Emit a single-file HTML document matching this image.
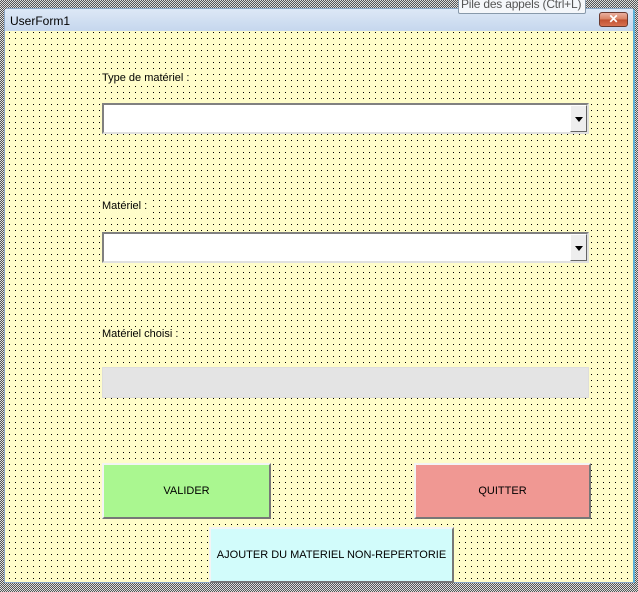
<!DOCTYPE html>
<html><head><meta charset="utf-8"><style>
*{margin:0;padding:0;box-sizing:border-box}
body{width:638px;height:592px;overflow:hidden;position:relative;
background:repeating-conic-gradient(#555 0 25%,#ddd 0 50%) 0 0/2px 2px;
font-family:"Liberation Sans",sans-serif;font-size:11px;color:#000}
.win{position:absolute;left:4px;top:8px;width:631px;height:575px;border:1px solid #8aa6c6;border-right:2px solid #5ab0d8;background:#fffdca;border-radius:4px 4px 0 0}
.title{position:absolute;left:0;top:0;right:0;height:23px;background:linear-gradient(#dde8f6,#c4d6ed);font-size:12px;padding:5px 0 0 5px}
.body{position:absolute;left:5px;top:31px;width:628px;height:551px;background-color:#fffdca;
background-image:conic-gradient(at 1px 1px,#0000 75%,#000 0);background-size:6px 6px;background-position:4px 1px}
.x{position:absolute;left:594px;top:3px;width:29px;height:15px;border:1px solid #6a3a30;border-radius:3px;background:linear-gradient(#eab0a0 0,#d88060 50%,#c05030 51%,#d87050);color:#fff;font-size:12px;font-weight:bold;text-align:center;line-height:13px}
.tip{position:absolute;left:458px;top:-5px;width:128px;height:19px;background:#f5f7fa;border:1px solid #8899aa;border-radius:2px;color:#555;font-size:12px;letter-spacing:-0.2px;white-space:nowrap;overflow:hidden;padding-left:2px;line-height:17px;z-index:5}
.lbl{position:absolute;background:#fffdca;padding:0 1px;line-height:13px}
.combo{position:absolute;left:102px;width:487px;height:31px;background:#fff;border:2px solid;border-color:#808080 #e0e0e0 #e0e0e0 #808080}
.combo .btn{position:absolute;right:0;top:0;width:17px;height:27px;background:#eee;border:1px solid;border-color:#fff #666 #666 #fff}
.combo .btn:after{content:"";position:absolute;left:4px;top:11px;border:4px solid transparent;border-top:5px solid #000}
.b{position:absolute;border:2px solid;border-color:#f4f4f4 #777 #777 #f4f4f4;display:flex;align-items:center;justify-content:center;font-size:11px}
</style></head><body>
<div class="tip">Pile des appels (Ctrl+L)</div>
<div class="win">
<div class="title">UserForm1<div class="x">✕</div></div>
</div>
<div class="body"></div>
<div class="lbl" style="left:101px;top:72px">Type de matériel :</div>
<div class="combo" style="top:103px"><div class="btn"></div></div>
<div class="lbl" style="left:101px;top:200px">Matériel :</div>
<div class="combo" style="top:232px"><div class="btn"></div></div>
<div class="lbl" style="left:101px;top:328px">Matériel choisi :</div>
<div style="position:absolute;left:102px;top:367px;width:487px;height:31px;background:#e4e4e4;border:1px solid #ddd"></div>
<div class="b" style="left:102px;top:463px;width:169px;height:56px;background:#aaf790">VALIDER</div>
<div class="b" style="left:414px;top:463px;width:177px;height:56px;background:#f09893">QUITTER</div>
<div class="b" style="left:209px;top:527px;width:245px;height:56px;background:#d2fcfb">AJOUTER DU MATERIEL NON-REPERTORIE</div>
</body></html>
